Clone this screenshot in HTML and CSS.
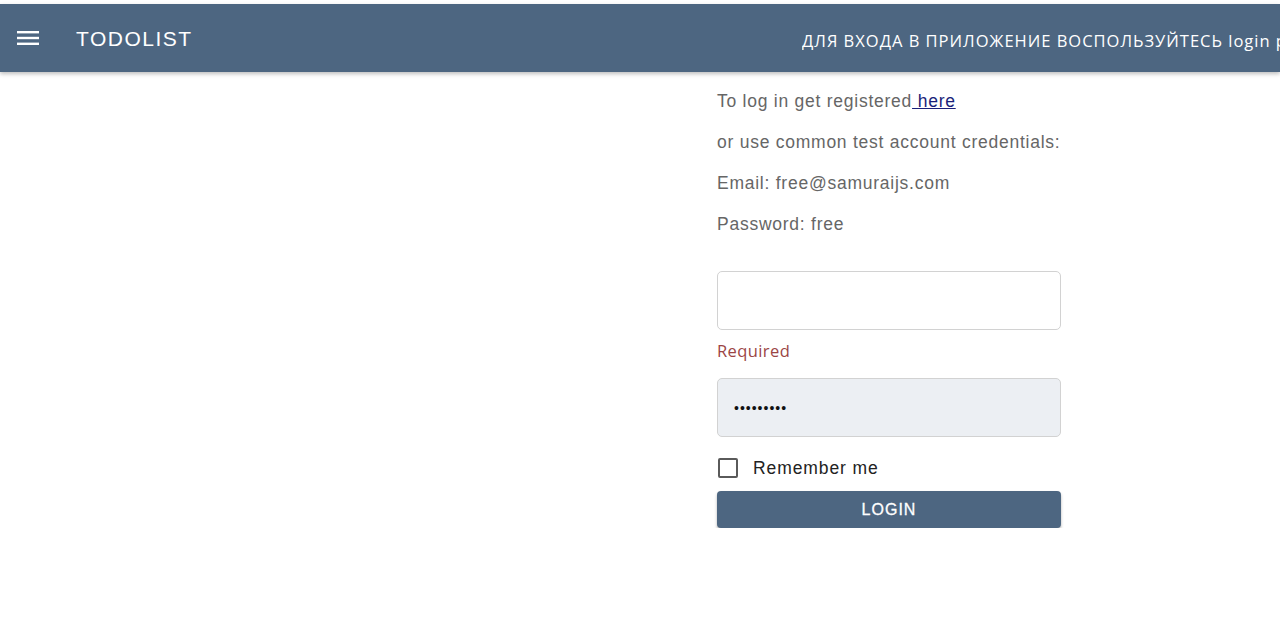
FILE: index.html
```html
<!DOCTYPE html>
<html>
<head>
<meta charset="utf-8">
<link rel="stylesheet" href="styles.css">
</head>
<body>
<header class="appbar">
  <button class="menu-btn" aria-label="menu">
    <svg width="22" height="16" viewBox="0 0 22 16"><rect x="0" y="1" width="22" height="2.4" fill="#fff"/><rect x="0" y="6.8" width="22" height="2.4" fill="#fff"/><rect x="0" y="12.6" width="22" height="2.4" fill="#fff"/></svg>
  </button>
  <div class="title">TODOLIST</div>
  <div class="notice">ДЛЯ ВХОДА В ПРИЛОЖЕНИЕ ВОСПОЛЬЗУЙТЕСЬ login page</div>
</header>
<main class="main">
  <form class="form">
    <p class="info">To log in get registered<a href="#" class="link"> here</a></p>
    <p class="info">or use common test account credentials:</p>
    <p class="info">Email: free@samuraijs.com</p>
    <p class="info">Password: free</p>
    <div class="field"></div>
    <div class="error">Required</div>
    <div class="field filled"><span class="dots">•••••••••</span></div>
    <label class="remember"><span class="box"></span><span>Remember me</span></label>
    <button type="button" class="login">LOGIN</button>
  </form>
</main>
</body>
</html>
```
FILE: styles.css
```css
html, body { margin: 0; padding: 0; background: #fff; overflow: hidden; }
body { font-family: "Liberation Sans", Arial, sans-serif; padding-top: 4px; }
.appbar {
  height: 68px;
  background: #4d6681;
  display: flex;
  align-items: center;
  box-shadow: 0 2px 4px rgba(0,0,0,0.25);
  white-space: nowrap;
  overflow: hidden;
}
.menu-btn {
  background: none; border: 0; padding: 0; margin-left: 17px;
  width: 22px; height: 16px; display: flex; flex-shrink: 0;
}
.title {
  color: #fff;
  font-size: 21px;
  margin-left: 37px;
  letter-spacing: 1.5px;
  flex: 1;
  padding-top: 1px;
}
.notice {
  flex: 0 0 478px;
  overflow: hidden;
  color: #fff;
  font-family: "Open Sans", sans-serif;
  font-size: 16.5px;
  letter-spacing: 1px;
  padding-top: 4px;
}
.main { padding: 19px 0 0 717px; }
.form { width: 344px; display: flex; flex-direction: column; }
.info {
  margin: 0 0 21px 0;
  font-size: 17.5px;
  letter-spacing: 0.75px;
  line-height: 20px;
  color: #666;
}
.link { color: #1a1f7a; text-decoration: underline; }
.field {
  margin-top: 16px;
  height: 57px;
  border: 1px solid #d2d2d2;
  border-radius: 5px;
  background: #fff;
  display: flex;
  align-items: center;
}
.field.filled { background: #eceff3; margin-top: 17px; }
.error {
  margin-top: 11px;
  font-family: "Open Sans", sans-serif;
  font-size: 16.5px;
  letter-spacing: 0.4px;
  line-height: 20px;
  color: #9b4545;
}
.dots { margin-left: 16px; font-size: 14px; letter-spacing: 1px; color: #111; }
.remember {
  display: flex; align-items: center;
  margin-top: 21px;
  font-size: 17.5px;
  letter-spacing: 0.9px;
  color: #222;
  height: 20px;
}
.box {
  border: 2px solid #5a5a5a;
  border-radius: 2px;
  margin-left: 1px;
  margin-right: 15px;
  box-sizing: border-box;
  width: 20px; height: 20px;
}
.login {
  margin-top: 13px;
  height: 37px;
  background: #4d6681;
  color: #fff;
  border: 0;
  border-radius: 4px;
  font-family: "Liberation Sans", Arial, sans-serif;
  font-size: 16px;
  font-weight: normal;
  letter-spacing: 1px;
  -webkit-text-stroke: 0.3px #fff;
  box-shadow: 0 2px 3px rgba(0,0,0,0.3);
  cursor: pointer;
}
```
